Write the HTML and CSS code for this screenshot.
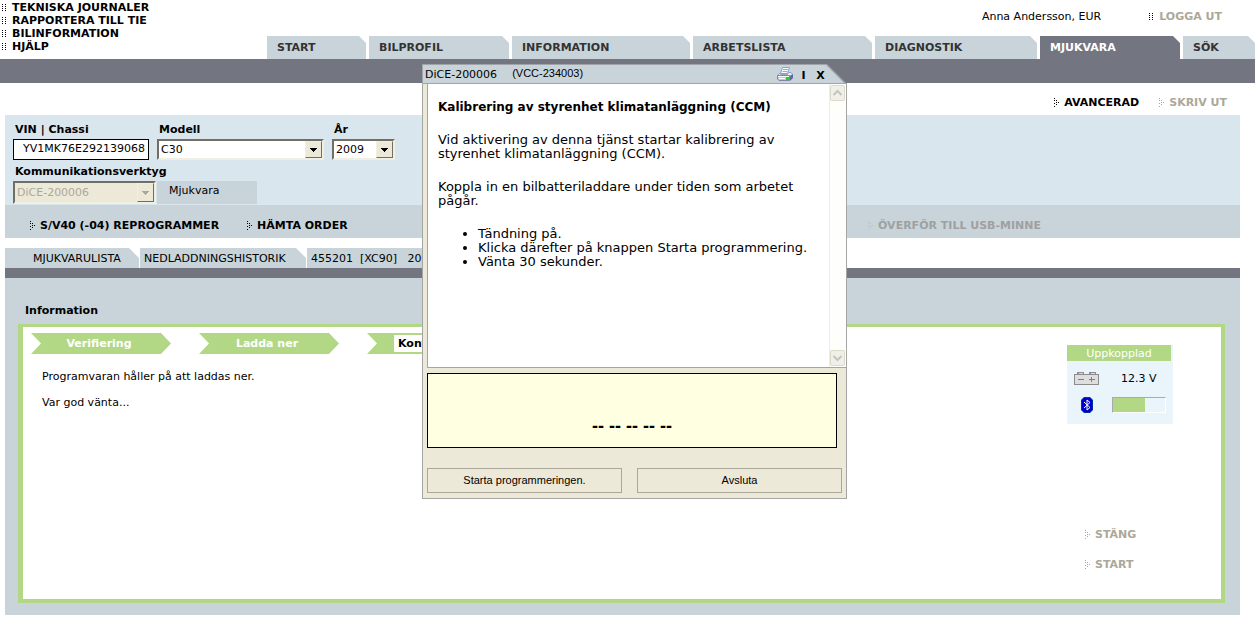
FILE: index.html
```html
<!DOCTYPE html>
<html lang="sv">
<head>
<meta charset="utf-8">
<title>Mjukvara</title>
<link rel="stylesheet" href="styles.css">
</head>
<body>
<svg class="defs" aria-hidden="true">
  <symbol id="grip" viewBox="0 0 4 7"><path fill="currentColor" d="M0 0h1v1H0zM3 0h1v1H3zM0 2h1v1H0zM3 2h1v1H3zM0 4h1v1H0zM3 4h1v1H3zM0 6h1v1H0zM3 6h1v1H3z"/></symbol>
  <symbol id="arrow" viewBox="0 0 5 9"><path fill="currentColor" d="M0 0h1v1H0zM0 2h1v1H0zM2 2h1v1H2zM0 5h1v1H0zM2 4h1v1H2zM4 4h1v1H4zM0 8h1v1H0zM2 6h1v1H2z"/></symbol>
</svg>

<header class="header">
  <nav class="quick-links">
    <a href="#"><svg class="grip"><use href="#grip"/></svg>TEKNISKA JOURNALER</a>
    <a href="#"><svg class="grip"><use href="#grip"/></svg>RAPPORTERA TILL TIE</a>
    <a href="#"><svg class="grip"><use href="#grip"/></svg>BILINFORMATION</a>
    <a href="#"><svg class="grip"><use href="#grip"/></svg>HJÄLP</a>
  </nav>
  <div class="header-main">
    <div class="user">
      <span>Anna Andersson, EUR</span>
      <a class="logout" href="#"><svg class="grip"><use href="#grip"/></svg><span class="muted">LOGGA UT</span></a>
    </div>
    <nav class="tabs">
      <a class="tab tab-start" href="#">START</a>
      <a class="tab tab-profile" href="#">BILPROFIL</a>
      <a class="tab tab-info" href="#">INFORMATION</a>
      <a class="tab tab-work" href="#">ARBETSLISTA</a>
      <a class="tab tab-diag" href="#">DIAGNOSTIK</a>
      <a class="tab tab-profile tab-active" href="#">MJUKVARA</a>
      <a class="tab tab-search" href="#">SÖK</a>
    </nav>
  </div>
</header>
<div class="band"></div>

<main class="page">
  <div class="page-actions">
    <a class="action" href="#"><svg class="arrow"><use href="#arrow"/></svg>AVANCERAD</a>
    <a class="action muted" href="#"><svg class="arrow"><use href="#arrow"/></svg>SKRIV UT</a>
  </div>

  <form class="vehicle">
    <div class="field vin">
      <label for="vin">VIN | Chassi</label>
      <input id="vin" type="text" value="YV1MK76E292139068">
    </div>
    <div class="field model">
      <label for="model">Modell</label>
      <span class="select"><select id="model"><option>C30</option></select><svg class="drop" viewBox="0 0 15 15"><path d="M4 6h7v1h-1v1H9v1H8v1H7V9H6V8H5V7H4z"/></svg></span>
    </div>
    <div class="field year">
      <label for="year">År</label>
      <span class="select"><select id="year"><option>2009</option></select><svg class="drop" viewBox="0 0 15 15"><path d="M4 6h7v1h-1v1H9v1H8v1H7V9H6V8H5V7H4z"/></svg></span>
    </div>
    <div class="field tool">
      <label for="tool">Kommunikationsverktyg</label>
      <div class="tool-row">
        <span class="select select-off"><select id="tool" disabled><option>DiCE-200006</option></select><svg class="drop" viewBox="0 0 15 15"><path d="M4 6h7v1h-1v1H9v1H8v1H7V9H6V8H5V7H4z"/></svg></span>
        <span class="tool-type">Mjukvara</span>
      </div>
    </div>
  </form>
  <div class="orders">
    <a class="action" href="#"><svg class="arrow"><use href="#arrow"/></svg>S/V40 (-04) REPROGRAMMER</a>
    <a class="action" href="#"><svg class="arrow"><use href="#arrow"/></svg>HÄMTA ORDER</a>
    <a class="action usb" href="#"><svg class="arrow"><use href="#arrow"/></svg>ÖVERFÖR TILL USB-MINNE</a>
  </div>

  <nav class="subtabs">
    <a class="subtab subtab-list" href="#">MJUKVARULISTA</a>
    <a class="subtab subtab-history" href="#">NEDLADDNINGSHISTORIK</a>
    <a class="subtab subtab-order" href="#">455201&nbsp; [XC90]&nbsp;&nbsp; 2009</a>
  </nav>
  <section class="work">
    <h2>Information</h2>
    <div class="box">
      <div class="box-main">
        <ol class="steps">
          <li>Verifiering</li>
          <li>Ladda ner</li>
          <li class="current"><span>Kontroll</span></li>
        </ol>
        <div class="message">
          <p>Programvaran håller på att laddas ner.</p>
          <p>Var god vänta...</p>
        </div>
      </div>
      <aside class="side">
        <div class="status">
          <div class="status-title">Uppkopplad</div>
          <div class="status-row">
            <svg class="battery" viewBox="0 0 25 13"><path fill="#8c8c9c" d="M3 0h7v3H3zM15 0h7v3h-7z"/><path fill="#d8d8e4" d="M5 1h4v1H5zM17 1h4v1h-4z"/><rect x=".5" y="2.500" width="24" height="10" fill="#dedede" stroke="#8c8c8c"/><path fill="#808080" d="M4 7h6v1H4zM15 7h6v1h-6zM17 5h1v5h-1z"/></svg>
            <span>12.3 V</span>
          </div>
          <div class="status-row">
            <svg class="bluetooth" viewBox="0 0 12 16"><path fill="#00309c" d="M3 0h6l3 3v10l-3 3H3l-3-3V3z"/><path fill="#00c" d="M3 1h6l2 2v10l-2 2H3l-2-2V3z"/><path d="M3 5l6 5.500-3 2.500V3l3 2.500L3 11" fill="none" stroke="#fff"/></svg>
            <div class="meter"><div class="meter-fill"></div></div>
          </div>
        </div>
        <div class="side-actions">
          <a class="action muted" href="#"><svg class="arrow"><use href="#arrow"/></svg>STÄNG</a>
          <a class="action muted" href="#"><svg class="arrow"><use href="#arrow"/></svg>START</a>
        </div>
      </aside>
    </div>
  </section>
</main>

<div class="dialog" role="dialog" aria-labelledby="dialog-name">
  <div class="dialog-bar">
    <div class="dialog-bar-face">
      <span id="dialog-name">DiCE-200006</span>
      <span class="dialog-code">(VCC-234003)</span>
      <button type="button" class="dialog-tool print" aria-label="Skriv ut">
        <svg viewBox="0 0 16 15"><path fill="#f4f8ff" stroke="#8aa4d0" d="M5.500.5h7l-2 6h-7z"/><path stroke="#8ab0e8" d="M6 2.500h5M5.500 4.500h5"/><path fill="#eef0f6" stroke="#98a4bc" d="M.5 8.500L3 6h.5v1.500h7l1-2H14l1.500 2-3 2H.5z"/><path fill="#c4c8d4" stroke="#7c88a4" d="M.5 8.500h12v5H2L.5 12z"/><path fill="#5c6c98" d="M13 9l3-2v4l-3 3z"/><path fill="#20d030" d="M9 10h3v3H9z"/><path fill="#fff" d="M1 9h11v1H1zM2 11h6v1H2z"/></svg>
      </button>
      <button type="button" class="dialog-tool">I</button>
      <button type="button" class="dialog-tool">X</button>
    </div>
  </div>
  <div class="dialog-body">
    <div class="dialog-view">
      <div class="dialog-text">
        <h1>Kalibrering av styrenhet klimatanläggning (CCM)</h1>
        <p>Vid aktivering av denna tjänst startar kalibrering av styrenhet klimatanläggning (CCM).</p>
        <p>Koppla in en bilbatteriladdare under tiden som arbetet pågår.</p>
        <ul>
          <li>Tändning på.</li>
          <li>Klicka därefter på knappen Starta programmering.</li>
          <li>Vänta 30 sekunder.</li>
        </ul>
      </div>
      <div class="scroll">
        <svg viewBox="0 0 13 14"><path d="M2.500 9l4-4 4 4"/></svg>
        <svg viewBox="0 0 13 14"><path d="M2.500 5l4 4 4-4"/></svg>
      </div>
    </div>
    <div class="reading">-- -- -- -- --</div>
    <div class="dialog-buttons">
      <button type="button">Starta programmeringen.</button>
      <button type="button">Avsluta</button>
    </div>
  </div>
</div>
</body>
</html>
```
FILE: styles.css
```css
* { box-sizing: border-box; }

body {
  margin: 0;
  background: #fff;
  color: #000;
  font: 11px/13px "DejaVu Sans", Verdana, sans-serif;
}

a { color: inherit; text-decoration: none; }
h1, h2, p, ul, ol { margin: 0; padding: 0; }
button, input, select { font: inherit; color: inherit; margin: 0; }
.defs { position: absolute; width: 0; height: 0; }
.grip { width: 4px; height: 7px; flex: none; }
.arrow { width: 5px; height: 9px; flex: none; }
.muted { color: #aca899; }

.action {
  display: flex;
  align-items: center;
  gap: 5px;
  font-weight: bold;
  white-space: nowrap;
}

/* Header */
.header { display: flex; height: 59px; }
.quick-links { width: 267px; flex: none; padding-top: 1px; font-weight: bold; }
.quick-links a { display: flex; align-items: center; gap: 6px; padding-left: 2px; }
.header-main {
  flex: 1;
  min-width: 0;
  display: flex;
  flex-direction: column;
  justify-content: space-between;
}
.user {
  display: flex;
  justify-content: flex-end;
  gap: 48px;
  padding: 10px 33px 0 0;
}
.logout { display: flex; align-items: center; gap: 6px; font-weight: bold; }
.tabs { display: flex; gap: 3px; }
.tab {
  flex: none;
  height: 23px;
  padding: 0 10px;
  background: #c8d4da;
  color: #333;
  font-weight: bold;
  line-height: 24px;
  clip-path: polygon(0 0, calc(100% - 7px) 0, 100% 7px, 100% 100%, 0 100%);
}
.tab-start { width: 99px; }
.tab-profile { width: 140px; }
.tab-info { width: 178px; }
.tab-work { width: 179px; }
.tab-diag { width: 162px; }
.tab-search { flex: 1 0 0; }
.tab-active { background: #737680; color: #fff; }
.band { height: 24px; background: #737680; }

/* Vehicle panel */
.page { padding: 0 15px 3px 5px; }
.page-actions {
  display: flex;
  justify-content: flex-end;
  align-items: center;
  gap: 20px;
  height: 32px;
  padding: 6px 13px 0 0;
}
.vehicle {
  display: grid;
  grid-template-columns: 136px 167px 63px;
  column-gap: 8px;
  align-content: start;
  height: 90px;
  padding: 8px 8px 0;
  background: #dae6ee;
}
.field { display: flex; flex-direction: column; min-width: 0; }
.field label { padding-left: 2px; font-weight: bold; line-height: 14px; }
.vin input {
  width: 100%;
  height: 21px;
  margin-top: 2px;
  padding: 0 0 2px 9px;
  border: 1px solid #000;
  background: #fff;
}
.tool { grid-column: 1 / -1; margin-top: 5px; }
.tool-row { display: flex; gap: 1px; align-items: flex-start; }
.tool-row .select { width: 143px; height: 23px; margin-top: 2px; }
.tool-type {
  width: 100px;
  height: 23px;
  margin-top: 2px;
  padding-left: 12px;
  background: #c8d4da;
  line-height: 20px;
}
.select {
  position: relative;
  display: flex;
  height: 21px;
  margin-top: 2px;
  border: 2px solid;
  border-color: #716f64 #f1efe2 #f1efe2 #716f64;
  background: #fff;
}
.select select {
  appearance: none;
  width: 100%;
  padding: 0 17px 0 2px;
  border: 0;
  background: transparent;
  opacity: 1;
}
.drop {
  position: absolute;
  top: 0;
  right: 0;
  width: 17px;
  height: 100%;
  border: 1px solid;
  border-color: #f1efe2 #716f64 #716f64 #f1efe2;
  background: #ece9d8;
  pointer-events: none;
}
.select-off { background: #ece9d8; color: #aca899; }
.select-off .drop { fill: #aca899; }

.orders {
  display: flex;
  align-items: center;
  gap: 28px;
  height: 33px;
  padding: 7px 199px 0 25px;
  background: #c8d4da;
}
.usb { margin-left: auto; color: #a0a0a0; }
.usb .arrow { color: #b8c0c4; }

/* Secondary tabs */
.subtabs { display: flex; gap: 1px; height: 30px; padding-top: 10px; }
.subtab {
  background: #c8d4da;
  line-height: 22px;
  white-space: nowrap;
  clip-path: polygon(0 0, calc(100% - 10px) 0, 100% 10px, 100% 100%, 0 100%);
}
.subtab-list { width: 134px; padding-left: 28px; }
.subtab-history { width: 166px; padding-left: 4px; }
.subtab-order { width: 166px; padding-left: 4px; }

/* Work area */
.work {
  min-height: 347px;
  padding: 26px 15px 12px 13px;
  border-top: 10px solid #737680;
  background: #c8d4da;
}
.work h2 { padding: 0 7px 7px; font-size: 11px; line-height: 13px; }
.box {
  display: flex;
  justify-content: space-between;
  min-height: 279px;
  border: solid #b2d886;
  border-width: 3px 4px 4px 5px;
  background: #fff;
}
.box-main { padding: 6px 8px; }
.steps { display: flex; gap: 28px; list-style: none; font-weight: bold; }
.steps li {
  width: 140px;
  height: 21px;
  padding-right: 4px;
  background: #b2d886;
  color: #fff;
  line-height: 21px;
  text-align: center;
  clip-path: polygon(0 0, calc(100% - 10px) 0, 100% 50%, calc(100% - 10px) 100%, 0 100%, 10px 50%);
}
.steps .current { padding: 2px 20px 2px 27px; color: #000; text-align: left; }
.current span { display: block; padding-left: 4px; background: #fff; line-height: 17px; }
.message { display: grid; gap: 13px; padding: 16px 11px; }

.side {
  display: flex;
  flex-direction: column;
  justify-content: space-between;
  padding: 18px 48px 28px 0;
}
.status { width: 106px; height: 79px; background: #eaf5fb; }
.status-title {
  height: 16px;
  margin-right: 2px;
  background: #b2d886;
  color: #fff;
  line-height: 17px;
  text-align: center;
}
.status-row {
  display: grid;
  grid-template-columns: 38px 1fr;
  align-items: center;
  height: 27px;
  padding: 7px 7px 0 0;
}
.status-row svg { justify-self: end; }
.status-row span { padding-left: 16px; }
.battery { width: 25px; height: 13px; margin-right: 6px; }
.bluetooth { width: 12px; height: 16px; margin-right: 12px; }
.meter {
  height: 16px;
  margin-left: 7px;
  border: 1px solid;
  border-color: #aaa #fff #fff #aaa;
}
.meter-fill { width: 62%; height: 100%; background: #b2d886; }
.side-actions { display: grid; gap: 17px; padding-left: 18px; }

/* Dialog */
.dialog {
  position: absolute;
  top: 64px;
  left: 422px;
  width: 425px;
  color: #000;
}
.dialog-bar,
.dialog-bar-face { clip-path: polygon(0 0, calc(100% - 20px) 0, 100% 20px, 100% 100%, 0 100%); }
.dialog-bar { padding: 1px 1px 0; background: #a0a4a8; }
.dialog-bar-face {
  display: flex;
  align-items: center;
  height: 18px;
  padding: 0 17px 0 2px;
  background: #c8d4da;
}
.dialog-code { margin-right: auto; padding: 0 0 2px 15px; font-family: "Liberation Sans", Arial, sans-serif; }
.dialog-tool {
  width: 17px;
  padding: 2px 0 0;
  border: 0;
  background: transparent;
  font-weight: bold;
  line-height: 13px;
}
.print { width: 18px; padding: 0; }
.print svg { display: block; width: 16px; height: 15px; fill: none; }
.dialog-body {
  padding: 0 0 5px 4px;
  border: 1px solid #a5a5a5;
  background: #ece9d8;
}
.dialog-view {
  display: flex;
  height: 284px;
  border: solid #a5a5a5;
  border-width: 0 0 1px 1px;
  background: #fff;
}
.dialog-text { flex: 1; padding: 16px 20px 0 10px; font-size: 13px; line-height: 14px; }
.dialog-text h1 { margin-bottom: 19px; font-size: 12px; line-height: 14px; }
.dialog-text p { margin-bottom: 19px; }
.dialog-text ul { padding-left: 40px; }
.scroll {
  display: flex;
  flex-direction: column;
  justify-content: space-between;
  width: 17px;
  padding: 1px 0;
  border-left: 1px solid #eeede5;
  background: #fefefb;
}
.scroll svg {
  width: 15px;
  height: 16px;
  border: 1px solid #dddac9;
  border-radius: 2px;
  background: #f1f0e8;
  fill: none;
  stroke: #c6c5bb;
  stroke-width: 2;
}
.reading {
  height: 75px;
  margin: 5px 9px 20px 0;
  padding-top: 42px;
  border: 1px solid #000;
  background: #ffffe1;
  font: bold 18px/20px "Liberation Sans", Arial, sans-serif;
  text-align: center;
}
.dialog-buttons {
  display: grid;
  grid-template-columns: 195px 1fr;
  gap: 15px;
  padding-right: 4px;
}
.dialog-buttons button {
  height: 25px;
  padding: 0;
  border: 1px solid #aca899;
  background: #ece9d8;
  font-family: "Liberation Sans", Arial, sans-serif;
}
```
